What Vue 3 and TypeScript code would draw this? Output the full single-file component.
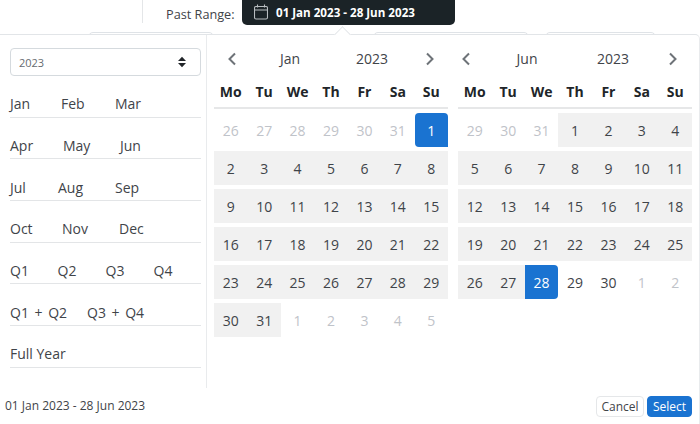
<script setup lang="ts">
interface Day { label: number; muted?: boolean; range?: boolean; start?: boolean; end?: boolean }

const seq = (from: number, to: number, extra: Partial<Day> = {}): Day[] => {
  const out: Day[] = []
  for (let i = from; i <= to; i++) out.push({ label: i, ...extra })
  return out
}

const jan: Day[] = [
  ...seq(26, 31, { muted: true }),
  { label: 1, start: true },
  ...seq(2, 31, { range: true }),
  ...seq(1, 5, { muted: true }),
]
const jun: Day[] = [
  ...seq(29, 31, { muted: true }),
  ...seq(1, 27, { range: true }),
  { label: 28, end: true },
  ...seq(29, 30),
  ...seq(1, 2, { muted: true }),
]
const calendars = [
  { month: 'Jan', year: '2023', days: jan, head: 'head-a' },
  { month: 'Jun', year: '2023', days: jun, head: 'head-b' },
]
const weekdays = ['Mo', 'Tu', 'We', 'Th', 'Fr', 'Sa', 'Su']
const presets = [
  [['Jan', 51], ['Feb', 54], ['Mar', 0]],
  [['Apr', 53], ['May', 57], ['Jun', 0]],
  [['Jul', 48], ['Aug', 57], ['Sep', 0]],
  [['Oct', 52], ['Nov', 57], ['Dec', 0]],
  [['Q1', 47.5], ['Q2', 48], ['Q3', 48], ['Q4', 0]],
  [['Q1 + Q2', 77], ['Q3 + Q4', 0]],
  [['Full Year', 0]],
] as [string, number][][]

function dayClass(d: Day) {
  return { muted: d.muted, range: d.range, start: d.start, end: d.end }
}
</script>

<template>
  <div class="page">
    <header class="topbar">
      <div class="divider"></div>
      <span class="range-label">Past Range:</span>
      <div class="range-btn">
        <svg class="cal-icon" width="14" height="16" viewBox="0 0 14 16" fill="none" stroke="#b8bdc0" stroke-width="1.1">
          <rect x="0.5" y="2.500" width="13" height="12.500" rx="1.500" />
          <path d="M0.500 6h13M3.500 0.500v3M10.500 0.500v3" />
        </svg>
        <span>01 Jan 2023 - 28 Jun 2023</span>
      </div>
    </header>

    <div class="ghosts">
      <i class="ghost g1"></i><i class="ghost g2"></i><i class="ghost g3"></i>
    </div>

    <section class="popover">
      <span class="notch"></span>
      <div class="panels">
        <aside class="side">
          <div class="select">
            <span>2023</span>
            <svg width="10" height="12" viewBox="0 0 10 12" fill="#212529">
              <path d="M5 .8 9 5H1zM5 11.200 1 7h8z" />
            </svg>
          </div>
          <div v-for="(row, i) in presets" :key="i" class="preset-row">
            <span
              v-for="[text, w] in row"
              :key="text"
              class="preset"
              :class="{ sum: text.includes('+') }"
              :style="w ? { width: w + 'px' } : undefined"
            >{{ text }}</span>
          </div>
        </aside>

        <div class="cals">
          <div v-for="cal in calendars" :key="cal.month" class="cal">
            <div class="cal-head" :class="cal.head">
              <svg class="chev" width="10" height="14" viewBox="0 0 10 14" fill="none" stroke="#6e7378" stroke-width="2">
                <path d="M8 1.500 2.500 7 8 12.500" />
              </svg>
              <span class="month">{{ cal.month }}</span>
              <span class="year">{{ cal.year }}</span>
              <svg class="chev" width="10" height="14" viewBox="0 0 10 14" fill="none" stroke="#6e7378" stroke-width="2">
                <path d="M2 1.500 7.500 7 2 12.500" />
              </svg>
            </div>
            <div class="week">
              <span v-for="w in weekdays" :key="w">{{ w }}</span>
            </div>
            <div class="days">
              <span v-for="(d, i) in cal.days" :key="i" class="day" :class="dayClass(d)">{{ d.label }}</span>
            </div>
          </div>
        </div>
      </div>

      <footer class="foot">
        <span class="summary">01 Jan 2023 - 28 Jun 2023</span>
        <div class="actions">
          <button class="btn cancel">Cancel</button>
          <button class="btn select-btn">Select</button>
        </div>
      </footer>
    </section>
  </div>
</template>

<style>
html, body { margin: 0; background: #fff; overflow: hidden; }
</style>

<style scoped>
.page {
  width: 700px;
  height: 424px;
  overflow: hidden;
  font-family: "Open Sans", "Noto Sans", sans-serif;
  color: #3f4449;
  background: #fff;
}
.topbar {
  height: 25px;
  display: flex;
  align-items: flex-start;
  padding-left: 142px;
}
.divider { width: 1px; height: 23px; background: #e4e6e8; }
.range-label {
  margin-left: 23px;
  width: 76px;
  font-size: 12.700px;
  line-height: 28px;
  white-space: nowrap;
}
.range-btn {
  width: 213px;
  height: 25px;
  box-sizing: border-box;
  background: #1b2327;
  border-radius: 0 0 5px 5px;
  display: flex;
  align-items: center;
  padding-left: 12px;
  gap: 8px;
  color: #fff;
  font-size: 11.600px;
  font-weight: 700;
  white-space: nowrap;
}
.cal-icon { flex: none; margin-top: -1px; }
.ghosts { height: 9px; position: relative; }
.ghost {
  position: absolute;
  top: 7px;
  height: 6px;
  border: 1px solid #dfe3e7;
  border-radius: 5px 5px 0 0;
}
.g1 { left: 88px; width: 124px; }
.g2 { left: 373px; width: 154px; }
.g3 { left: 545px; width: 109px; }
.popover {
  position: relative;
  width: 700px;
  height: 390px;
  box-sizing: border-box;
  background: #fff;
  border-top: 1px solid #e2e5e8;
  border-right: 1px solid #e9ebed;
  border-radius: 0 5px 0 0;
}
.notch {
  position: absolute;
  left: 336px;
  top: -7px;
  width: 12px;
  height: 12px;
  background: #fff;
  border-top: 1px solid #e2e5e8;
  border-left: 1px solid #e2e5e8;
  transform: rotate(45deg) scale(.9);
}
.panels { display: flex; height: 353px; position: relative; }
.side {
  width: 207px;
  flex: none;
  box-sizing: border-box;
  padding: 13px 5px 0 10px;
  border-right: 1px solid #e9ebed;
}
.select {
  height: 28px;
  box-sizing: border-box;
  border: 1px solid #d5dade;
  border-radius: 4px;
  display: flex;
  align-items: center;
  justify-content: space-between;
  padding: 0 13px 0 8px;
  font-size: 11px;
  color: #666b70;
}
.preset-row {
  height: 41.700px;
  box-sizing: border-box;
  border-bottom: 1px solid #e3e5e7;
  display: flex;
  align-items: flex-end;
  padding-bottom: 2.500px;
  font-size: 14px;
  line-height: 20px;
}
.preset { white-space: nowrap; }
.preset.sum { word-spacing: 2px; }
.cals { display: flex; padding: 0 0 0 7px; gap: 10px; }
.cal { width: 234px; flex: none; }
.cal-head {
  height: 47px;
  display: grid;
  align-items: center;
  justify-items: center;
  font-size: 14px;
  margin-bottom: -2px;
  box-sizing: border-box;
}
.head-a { grid-template-columns: 36px 80px 84px 32px; }
.head-b { grid-template-columns: 16px 106px 66px 54px; }
.week {
  display: grid;
  grid-template-columns: repeat(7, 1fr);
  height: 29px;
  box-sizing: border-box;
  border-bottom: 2px solid #e6e7e8;
  font-weight: 700;
  font-size: 14px;
  color: #212529;
  text-align: center;
  line-height: 24px;
}
.days {
  display: grid;
  grid-template-columns: repeat(7, 1fr);
  grid-auto-rows: 34px;
  row-gap: 4px;
  margin-top: 4px;
}
.day {
  display: flex;
  align-items: center;
  justify-content: center;
  font-size: 14px;
}
.day.muted { color: #bfc3c9; }
.day.range { background: #f1f1f1; }
.day.start { background: #1a73d1; color: #fff; border-radius: 4px 4px 0 4px; }
.day.end { background: #1a73d1; color: #fff; border-radius: 0 4px 4px 0; }
.foot {
  display: flex;
  align-items: flex-end;
  justify-content: space-between;
  padding: 7px 7px 0 5px;
}
.summary { font-size: 12px; line-height: 22px; color: #3f4449; }
.actions { display: flex; gap: 3px; }
.btn {
  height: 21px;
  padding: 0;
  font: inherit;
  font-size: 12px;
  line-height: 19px;
  border-radius: 4px;
  box-sizing: border-box;
}
.cancel { width: 48px; background: #fff; border: 1px solid #e5e7e9; color: #3f4449; }
.select-btn { width: 45px; background: #1a73d1; border: 1px solid #1a73d1; color: #fff; }
</style>
